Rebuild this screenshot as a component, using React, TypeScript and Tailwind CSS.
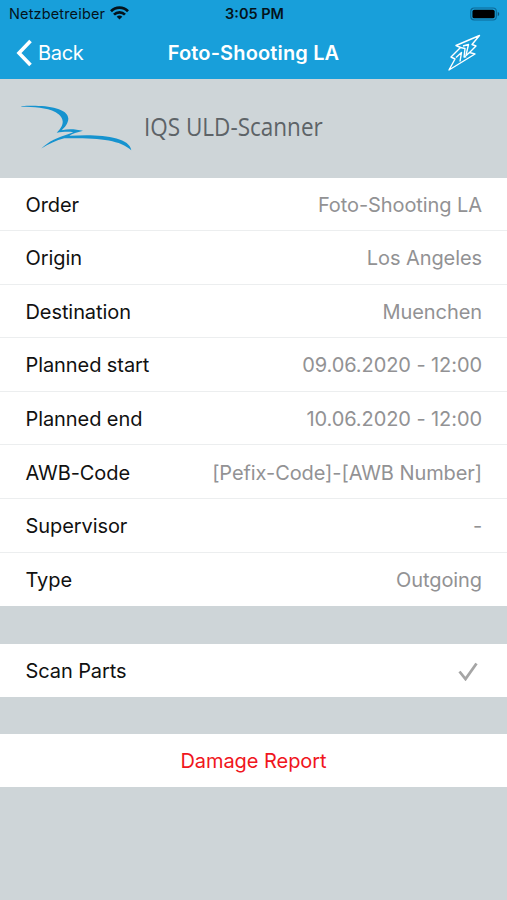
const rows = [
  { label: 'Order', value: 'Foto-Shooting LA' },
  { label: 'Origin', value: 'Los Angeles' },
  { label: 'Destination', value: 'Muenchen' },
  { label: 'Planned start', value: '09.06.2020 - 12:00' },
  { label: 'Planned end', value: '10.06.2020 - 12:00' },
  { label: 'AWB-Code', value: '[Pefix-Code]-[AWB Number]' },
  { label: 'Supervisor', value: '-' },
  { label: 'Type', value: 'Outgoing' },
];

function StatusBar() {
  return (
    <div className="grid h-[27px] grid-cols-[1fr_auto_1fr] items-center pl-[9px] pr-[7px] text-[#04131b]">
      <div className="flex items-center gap-[5px]">
        <span className="text-[14.5px] tracking-[0.15px]">Netzbetreiber</span>
        <svg className="-mt-0.5" width="19" height="14" viewBox="0 0 19 14" fill="none" stroke="currentColor" strokeWidth="2.7">
          <path d="M1 5.2C5.8.4 13.2.4 18 5.2" />
          <path d="M4 8.6c3-3 8-3 11 0" />
          <path d="M9.5 13.5 6.7 10.7c1.5-1.5 4.1-1.5 5.6 0Z" fill="currentColor" stroke="none" />
        </svg>
      </div>
      <span className="text-[14.5px] font-semibold">3:05 PM</span>
      <svg className="justify-self-end" width="30" height="14" viewBox="0 0 31 14">
        <rect x=".8" y=".8" width="26.4" height="12.4" rx="3.5" fill="none" stroke="#0c6a98" strokeWidth="1.2" />
        <rect x="2.500" y="2.500" width="23" height="9" rx="2" fill="#000" />
        <path d="M28.7 4.7c2 .8 2 3.8 0 4.6Z" fill="#0c567b" />
      </svg>
    </div>
  );
}

function NavBar() {
  return (
    <div className="grid h-[52px] grid-cols-[1fr_auto_1fr] items-center px-[16px] text-white">
      <button className="flex items-center gap-[5px]">
        <svg width="17" height="28" viewBox="0 0 17 28" fill="none" stroke="currentColor" strokeWidth="3.6">
          <path d="M14.5 2 3 14l11.500 12" />
        </svg>
        <span className="text-[20px] tracking-[-0.3px]">Back</span>
      </button>
      <h1 className="text-[20px] font-semibold tracking-[0.15px]">Foto-Shooting LA</h1>
      <svg className="mr-[9px] justify-self-end" width="36" height="40" viewBox="0 0 36 40" fill="none" stroke="currentColor" strokeWidth="1.400" strokeLinejoin="round">
        <path d="M33.500 2.500 10 12.500l4.500 2L5 24l4 2L3 37l26-16-5.500-1.500 6.500-6.500-4-1.500Z" />
        <path d="m10 24.500 5.500-5-1.500 9M18 24.500l1-9-4.500-1M19.500 24.500l3-13-5.500 1.500M18 24.500l5.500-5" />
      </svg>
    </div>
  );
}

export default function App() {
  return (
    <div className="flex min-h-[900px] w-[507px] flex-col bg-[#ced5d8] font-['Inter',sans-serif]">
      <header className="bg-[#189fda]">
        <StatusBar />
        <NavBar />
      </header>

      {/* Brand */}
      <div className="flex h-[98.5px] items-center gap-[12.5px] pl-[19.5px]">
        <svg className="mt-0.5" width="112" height="48" viewBox="57 73.5 336 144" fill="#1693cf">
          <path d="M61 77C118 73 200 78 202 114c0 14-10 26-20 35 22-5 42-3 64 2-18 5-32 8-41 15 80-6 180 0 186 43-36-32-96-37-201-36-25 6-47 17-69 31 22-22 50-34 80-43l16-6c-18-2-32-1-50 2 18-17 31-42-3-62-28-14-65-15-103-16Z" />
        </svg>
        <span className="-mt-[4px] origin-left scale-x-[0.9] whitespace-nowrap font-['Open_Sans',sans-serif] text-[25px] text-[#5d6367]">
          IQS ULD-Scanner
        </span>
      </div>

      <dl className="bg-white">
        {rows.map((row) => (
          <div
            key={row.label}
            className="flex h-[53.6px] items-center justify-between border-b border-[#eceeef] pl-[25.5px] pr-[25px] pt-[1.5px] text-[20px] tracking-[-0.08px] last:border-b-0"
          >
            <dt className="text-[#111]">{row.label}</dt>
            <dd className="text-[#929294]">{row.value}</dd>
          </div>
        ))}
      </dl>

      <div className="mt-[37.5px] flex h-[53.5px] items-center justify-between bg-white pl-[25.5px] pr-[29px] pt-px text-[20px] tracking-[-0.1px] text-[#111]">
        <span>Scan Parts</span>
        <svg width="20" height="19" viewBox="0 0 20 19" fill="none" stroke="#a5a5a5" strokeWidth="2.8">
          <path d="m1.500 9.500 6 7.500L18.500 1.500" />
        </svg>
      </div>

      <button className="mt-[37px] h-[53px] bg-white pt-px text-[20px] tracking-[-0.05px] text-[#f01520]">Damage Report</button>
    </div>
  );
}
